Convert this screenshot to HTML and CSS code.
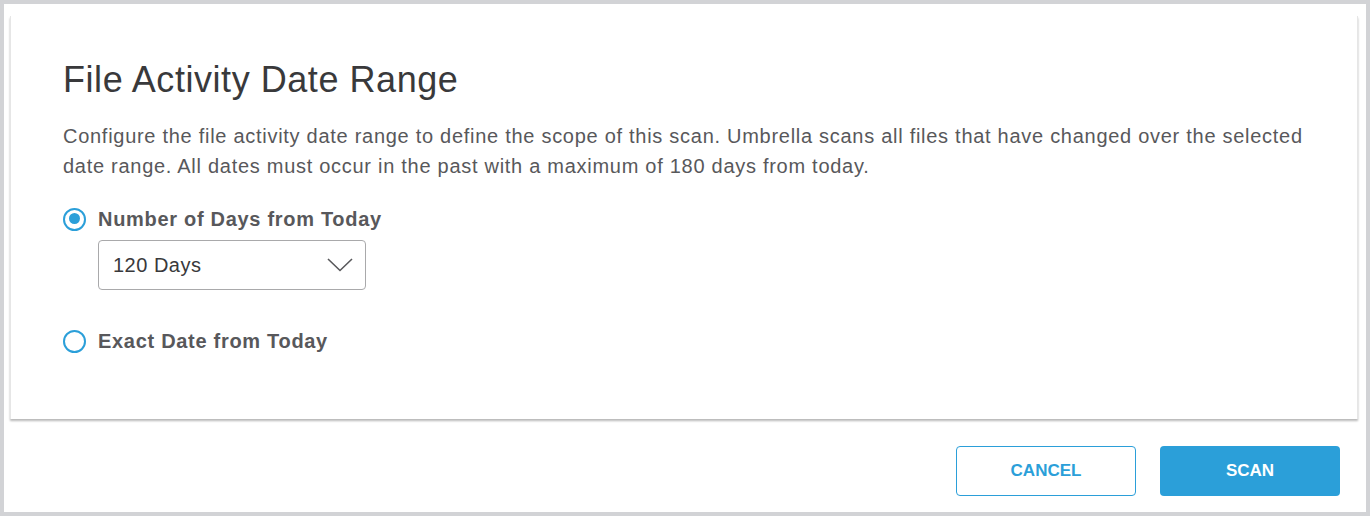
FILE: index.html
```html
<!DOCTYPE html>
<html lang="en">
<head>
    <meta charset="UTF-8">
    <title>File Activity Date Range</title>
    <link rel="stylesheet" href="styles.css">
</head>
<body>

    <div class="frame">
        <!-- Диалог -->
        <div class="card">
            <h1 class="title">File Activity Date Range</h1>
            <p class="desc">Configure the file activity date range to define the scope of this scan. Umbrella scans all files that have changed over the selected date range. All dates must occur in the past with a maximum of 180 days from today.</p>

            <label class="radio-row">
                <span class="radio checked"></span>
                <span class="radio-label">Number of Days from Today</span>
            </label>
            <div class="select">
                <span>120 Days</span>
                <svg width="26" height="14" viewBox="0 0 26 14">
                    <path d="M1 1 L13 12.5 L25 1" fill="none" stroke="#58585b" stroke-width="1.6"/>
                </svg>
            </div>

            <label class="radio-row second">
                <span class="radio"></span>
                <span class="radio-label">Exact Date from Today</span>
            </label>
        </div>

        <div class="footer">
            <button class="btn btn-outline">CANCEL</button>
            <button class="btn btn-primary">SCAN</button>
        </div>
    </div>

</body>
</html>
```

FILE: styles.css
```css
body {
    margin: 0;
    font-family: "Liberation Sans", Arial, sans-serif;
}

.frame {
    width: 1370px;
    height: 516px;
    box-sizing: border-box;
    border: 4px solid #d2d3d6;
    background-color: white;
}

.card {
    margin: 12px 8px 0 6px;
    height: 403px;
    box-sizing: border-box;
    padding: 42px 40px 0 52px;
    background-color: white;
    border-left: 1px solid #e6e6e6;
    border-right: 1px solid #e6e6e6;
    box-shadow: 0 2px 2px rgba(0, 0, 0, 0.28);
}

.title {
    margin: 0;
    font-size: 36px;
    line-height: 44px;
    font-weight: normal;
    letter-spacing: 0.55px;
    color: #39393b;
}

.desc {
    margin: 19px 0 0 0;
    font-size: 20px;
    line-height: 30px;
    letter-spacing: 0.72px;
    color: #58585b;
}

.radio-row {
    display: flex;
    align-items: center;
    gap: 12px;
    margin-top: 23px;
}

.radio-row.second {
    margin-top: 36px;
}

.radio {
    width: 23px;
    height: 23px;
    box-sizing: border-box;
    border: 2.5px solid #2b9fd9;
    border-radius: 50%;
    position: relative;
}

.radio.checked::after {
    content: "";
    position: absolute;
    top: 3.5px;
    left: 3.5px;
    width: 11px;
    height: 11px;
    border-radius: 50%;
    background-color: #2b9fd9;
}

.radio-label {
    font-size: 20px;
    line-height: 30px;
    font-weight: bold;
    letter-spacing: 0.7px;
    color: #58585b;
}

.select {
    margin: 6px 0 0 35px;
    width: 268px;
    height: 50px;
    box-sizing: border-box;
    border: 1px solid #a9a9ab;
    border-radius: 4px;
    display: flex;
    align-items: center;
    justify-content: space-between;
    padding: 0 12px 0 14px;
    font-size: 20px;
    letter-spacing: 0.5px;
    color: #39393b;
}

.footer {
    display: flex;
    justify-content: flex-end;
    gap: 24px;
    padding: 27px 26px 0 0;
}

.btn {
    width: 180px;
    height: 50px;
    box-sizing: border-box;
    border-radius: 4px;
    font-family: "Liberation Sans", Arial, sans-serif;
    font-size: 17px;
    font-weight: bold;
    cursor: pointer;
}

.btn-outline {
    background-color: white;
    border: 1px solid #2b9fd9;
    color: #2b9fd9;
}

.btn-primary {
    background-color: #2b9fd9;
    border: none;
    color: white;
}
```
